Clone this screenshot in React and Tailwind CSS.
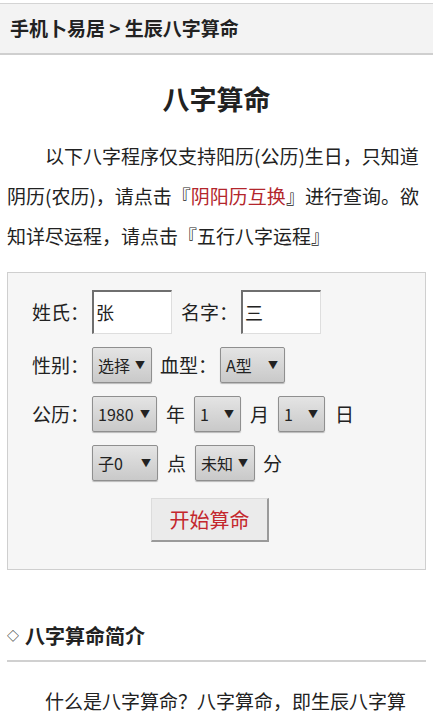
import React from 'react'

// 八字算命 form page, mobile layout
const font = { fontFamily: '"Noto Sans CJK SC", "Noto Sans", sans-serif' }

function Field({ value, w }) {
  return (
    <div className={`h-[44px] ${w} bg-white border-t-2 border-l-2 border-t-[#6f6f6f] border-l-[#6f6f6f] border-r border-b border-r-[#dedede] border-b-[#dedede] flex items-center pl-[2px] text-[18px] text-[#222]`}>
      {value}
    </div>
  )
}

function Pick({ label, w }) {
  return (
    <div className={`h-[36px] ${w} flex items-center justify-between pl-[5px] pr-[6px] rounded-[2px] border border-[#8f8f8f] bg-gradient-to-b from-[#e4e4e4] to-[#c9c9c9] shadow-[0_1px_1px_rgba(0,0,0,0.25)] text-[16px] text-[#222]`}>
      <span>{label}</span>
      <span className="text-[10px] leading-none">▼</span>
    </div>
  )
}

export default function App() {
  return (
    <div className="w-[433px] min-h-[722px] bg-white text-[#222] overflow-hidden" style={font}>
      {/* breadcrumb bar */}
      <div className="mt-[3px] h-[52px] border-t border-b-2 border-t-[#d4d4d4] border-b-[#cfcfcf] bg-[#f3f3f3] flex items-center pl-[10px] text-[19px] font-bold">
        手机卜易居 &gt; 生辰八字算命
      </div>

      <h1 className="mt-[21px] text-center text-[27px] font-bold leading-[46px]">八字算命</h1>

      <p className="mt-[14px] pl-[7px] pr-[10px] text-[19px] leading-[40px] indent-[38px] text-[#222]">
        以下八字程序仅支持阳历(公历)生日，只知道阴历(农历)，请点击『<span className="text-[#b3262c]">阴阳历互换</span>』进行查询。欲知详尽运程，请点击『五行八字运程』
      </p>

      {/* form box */}
      <div className="mx-[7px] mt-[16px] h-[298px] border border-[#cfcfcf] bg-[#f6f6f6] pt-[17px] pl-[24px] text-[19px]">
        <div className="flex items-center">
          <span className="w-[60px]">姓氏：</span>
          <Field value="张" w="w-[80px]" />
          <span className="ml-[9px] w-[60px]">名字：</span>
          <Field value="三" w="w-[80px]" />
        </div>

        <div className="flex items-center mt-[13px]">
          <span className="w-[60px]">性别：</span>
          <Pick label="选择" w="w-[60px]" />
          <span className="ml-[8px] w-[60px]">血型：</span>
          <Pick label="A型" w="w-[65px]" />
        </div>

        <div className="flex items-center mt-[13px]">
          <span className="w-[60px]">公历：</span>
          <Pick label="1980" w="w-[65px]" />
          <span className="mx-[9px]">年</span>
          <Pick label="1" w="w-[47px]" />
          <span className="mx-[9px]">月</span>
          <Pick label="1" w="w-[47px]" />
          <span className="ml-[10px]">日</span>
        </div>

        <div className="flex items-center mt-[13px] pl-[60px]">
          <Pick label="子0" w="w-[66px]" />
          <span className="mx-[9px]">点</span>
          <Pick label="未知" w="w-[60px]" />
          <span className="ml-[8px]">分</span>
        </div>

        <div className="mt-[17px] ml-[119px]">
          <button className="w-[118px] h-[44px] bg-[#ebebeb] border border-t-[#dcdcdc] border-l-[#dcdcdc] border-r-2 border-b-2 border-r-[#9a9a9a] border-b-[#9a9a9a] text-[20px] text-[#c4272d]">
            开始算命
          </button>
        </div>
      </div>

      {/* intro section */}
      <div className="mx-[7px] mt-[50px] border-b-2 border-[#d0d0d0] pb-[8px] text-[20px] font-bold leading-[32px] flex items-center">
        <span className="text-[12px] font-normal text-[#222] mr-[6px]">◇</span>
        八字算命简介
      </div>
      <p className="mt-[19px] pl-[7px] pr-[10px] text-[19px] leading-[40px] indent-[38px]">
        什么是八字算命？八字算命，即生辰八字算命，是根据一个人出生的年、月、日、时，按天干地支排列成四柱八字。
      </p>
    </div>
  )
}
